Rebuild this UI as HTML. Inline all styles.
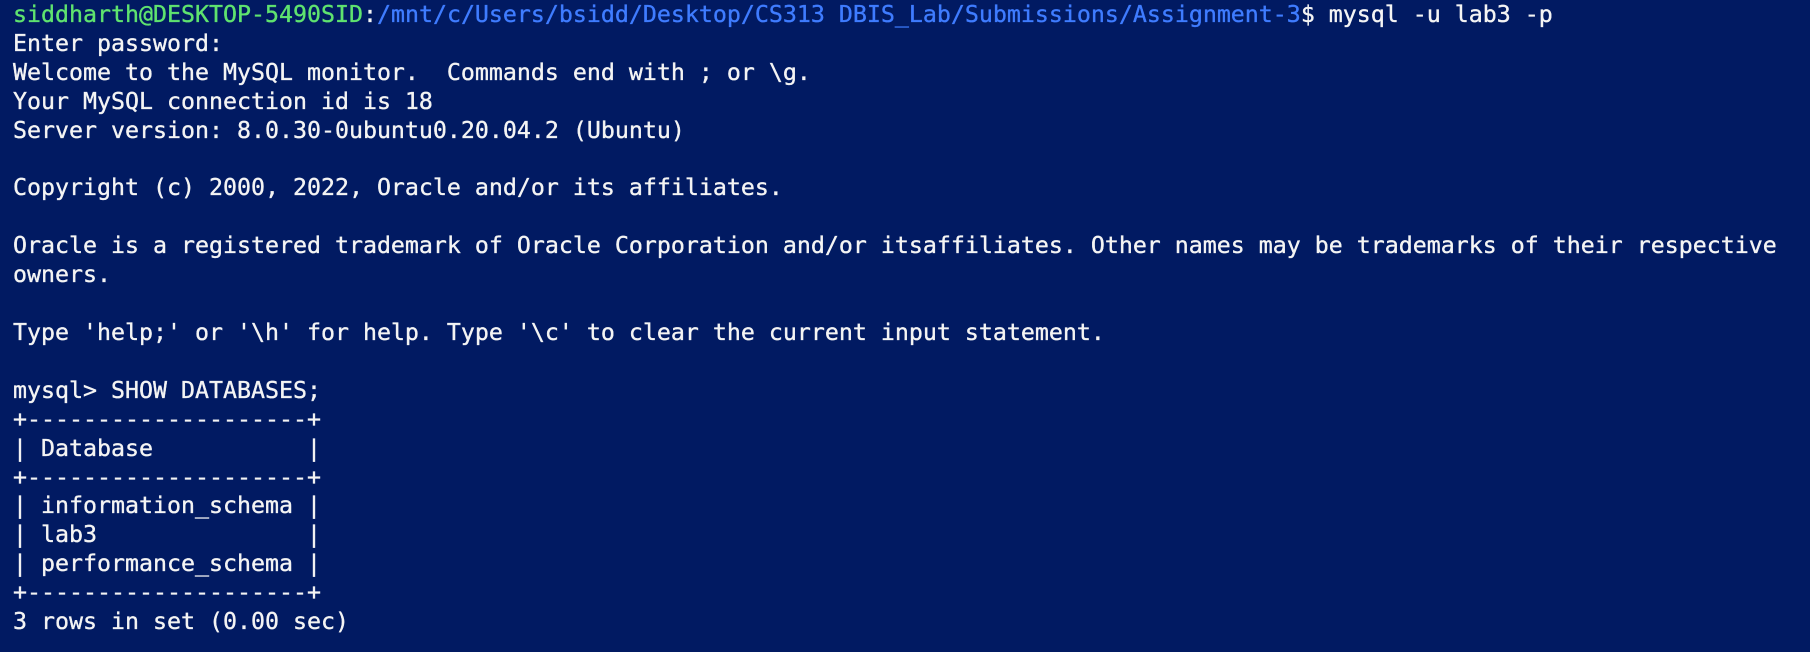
<!DOCTYPE html>
<html><head><meta charset="utf-8"><style>
html,body{margin:0;padding:0;}
body{width:1810px;height:652px;background:#011a62;overflow:hidden;}
pre{margin:0;position:absolute;left:13px;top:1px;font-family:"DejaVu Sans Mono","Liberation Mono",monospace;font-size:23.25px;line-height:28.9px;color:#f4f4f4;white-space:pre;letter-spacing:0px;-webkit-text-stroke:0.35px currentColor;}
.g{color:#5fe36f;}
.b{color:#3f7cff;}
</style></head><body>
<pre><span class="g">siddharth@DESKTOP-5490SID</span>:<span class="b">/mnt/c/Users/bsidd/Desktop/CS313 DBIS_Lab/Submissions/Assignment-3</span>$ mysql -u lab3 -p
Enter password:
Welcome to the MySQL monitor.  Commands end with ; or \g.
Your MySQL connection id is 18
Server version: 8.0.30-0ubuntu0.20.04.2 (Ubuntu)

Copyright (c) 2000, 2022, Oracle and/or its affiliates.

Oracle is a registered trademark of Oracle Corporation and/or itsaffiliates. Other names may be trademarks of their respective
owners.

Type 'help;' or '\h' for help. Type '\c' to clear the current input statement.

mysql&gt; SHOW DATABASES;
+--------------------+
| Database           |
+--------------------+
| information_schema |
| lab3               |
| performance_schema |
+--------------------+
3 rows in set (0.00 sec)</pre>
</body></html>
